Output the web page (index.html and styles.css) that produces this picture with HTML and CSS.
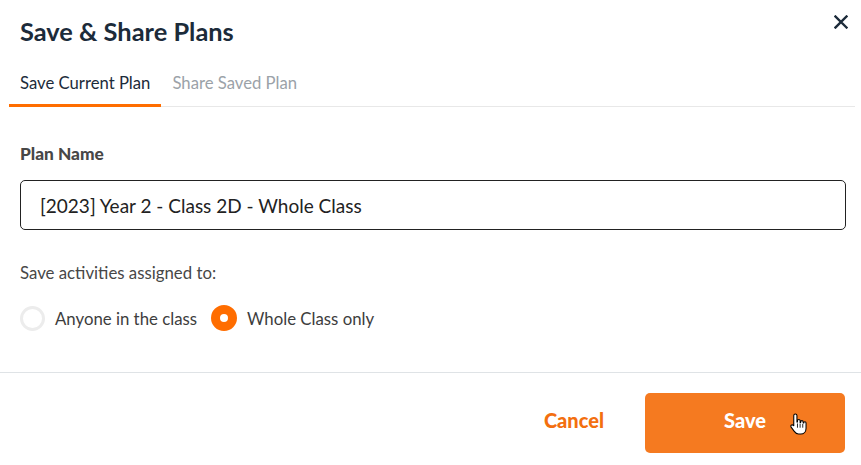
FILE: index.html
```html
<!DOCTYPE html>
<html lang="en">
<head>
<meta charset="utf-8">
<title>Save &amp; Share Plans</title>
<link rel="stylesheet" href="styles.css">
</head>
<body>
<div class="dialog">
  <div class="header">
    <h1 class="title">Save &amp; Share Plans</h1>
    <button class="close" aria-label="Close">
      <svg width="14" height="14" viewBox="0 0 14 14"><path d="M1.5 1.5 L12.5 12.5 M12.5 1.5 L1.5 12.5" stroke="#1c2b3a" stroke-width="2.4" stroke-linecap="square" fill="none"/></svg>
    </button>
  </div>
  <div class="tabs">
    <div class="tab active">Save Current Plan</div>
    <div class="tab">Share Saved Plan</div>
  </div>
  <div class="body">
    <label class="field-label">Plan Name</label>
    <div class="input">[2023] Year 2 - Class 2D - Whole Class</div>
    <div class="sub-label">Save activities assigned to:</div>
    <div class="radios">
      <div class="radio-item"><span class="radio"></span><span class="radio-text">Anyone in the class</span></div>
      <div class="radio-item"><span class="radio checked"></span><span class="radio-text">Whole Class only</span></div>
    </div>
  </div>
  <div class="footer">
    <button class="cancel">Cancel</button>
    <button class="save">Save
      <svg class="cursor" width="18" height="24" viewBox="0 0 17 22"><path d="M6 1.5c.8 0 1.5.7 1.5 1.5V9h.5V8c0-.8.6-1.3 1.3-1.3s1.2.5 1.2 1.3v1.5h.5V9c0-.7.6-1.2 1.2-1.2s1.2.5 1.2 1.2v1h.5c0-.6.5-1.1 1.1-1.1s1.1.5 1.1 1.1V15c0 3-2 5.5-5 5.5H9c-2 0-3-1-4-2.5L2 14c-.5-.8-.3-1.6.4-2 .7-.4 1.5-.1 2 .6l.1.4V3c0-.8.7-1.5 1.5-1.5z" fill="#fff" stroke="#000" stroke-width="1"/><path d="M8 10.5v4M10.5 10.5v4M13 11v3.5" stroke="#000" stroke-width=".8"/></svg>
    </button>
  </div>
</div>
</body>
</html>
```
FILE: styles.css
```css
* { box-sizing: border-box; }
html, body { margin: 0; padding: 0; background: #fff; }
body { font-family: Lato, "Open Sans", sans-serif; color: #1c2b3a; width: 861px; height: 465px; overflow: hidden; }

.dialog { width: 861px; }

.header { display: flex; justify-content: space-between; align-items: flex-start; padding: 16px 12px 0 20px; }
.title { margin: 0; font-size: 25.4px; font-weight: 700; line-height: normal; color: #1c2b3a; }
.close { border: 0; background: none; padding: 0; margin-top: -2px; width: 16px; height: 16px; display: flex; align-items: center; justify-content: center; cursor: pointer; }

.tabs { display: flex; margin: 27px 6px 0 9px; border-bottom: 1px solid #e8e8e8; }
.tab { font-size: 16.7px; line-height: normal; padding: 0 11px 13px; color: #9ba2a8; }
.tab.active { color: #1c2b3a; border-bottom: 3px solid #ff6d00; margin-bottom: -1px; padding-bottom: 11px; }

.body { padding: 36px 15px 0 20px; }
.field-label { display: block; font-size: 17.3px; font-weight: 900; color: #474747; line-height: normal; }
.input { margin-top: 16px; height: 50px; border: 1px solid #222; border-radius: 5px; display: flex; align-items: center; padding: 0 19px; font-size: 19px; color: #222; }
.sub-label { margin-top: 32px; font-size: 16.8px; color: #474747; line-height: normal; }
.radios { display: flex; align-items: center; gap: 14px; margin-top: 22px; }
.radio-item { display: flex; align-items: center; gap: 10px; }
.radio { width: 25px; height: 25px; border-radius: 50%; border: 3px solid #ececec; background: #fff; }
.radio.checked { width: 26px; height: 26px; border: 9px solid #ff6d00; }
.radio-text { font-size: 16.8px; color: #3d3d3d; }

.footer { margin-top: 41px; border-top: 1px solid #dfe3e6; display: flex; justify-content: flex-end; align-items: center; gap: 41px; padding: 20px 16px 13px 20px; }
.cancel { border: 0; background: none; font-family: inherit; font-size: 20px; font-weight: 900; color: #f36f0f; padding: 0 0 6px; }
.save { position: relative; width: 200px; height: 60px; border: 0; border-radius: 5px; background: #f57a20; color: #fff; font-family: inherit; font-size: 20px; font-weight: 900; padding: 0 0 6px; }
.cursor { position: absolute; left: 144px; top: 19px; }
```
